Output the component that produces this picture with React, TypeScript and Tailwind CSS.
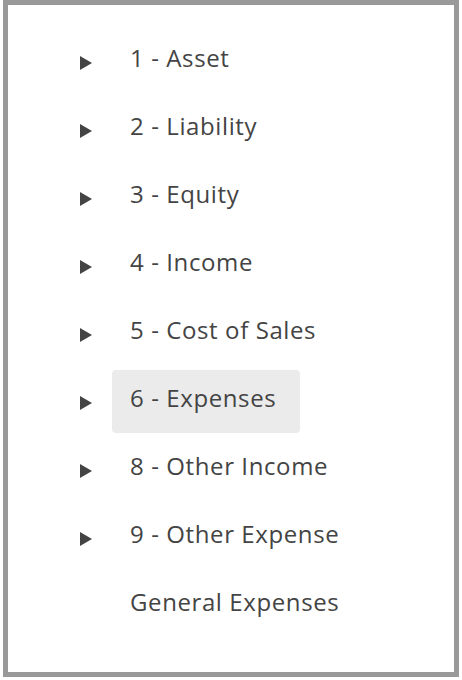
const accounts = [
  { label: '1 - Asset', expandable: true },
  { label: '2 - Liability', expandable: true },
  { label: '3 - Equity', expandable: true },
  { label: '4 - Income', expandable: true },
  { label: '5 - Cost of Sales', expandable: true },
  { label: '6 - Expenses', expandable: true, selected: true },
  { label: '8 - Other Income', expandable: true },
  { label: '9 - Other Expense', expandable: true },
  { label: 'General Expenses', expandable: false },
];

function Caret() {
  return (
    <svg width="12" height="14" viewBox="0 0 12 14" className="mt-[3px]">
      <path d="M0 0 L12 7 L0 14 Z" fill="#444" />
    </svg>
  );
}

export default function App() {
  return (
    <div className="w-[462px] h-[680px] bg-white">
      <div
        className="ml-[3px] w-[456px] h-[677px] border-[5px] border-[#999] bg-white pt-[25px]"
        style={{ fontFamily: '"Open Sans", "Noto Sans", sans-serif' }}
      >
        <ul className="flex flex-col gap-[5px]">
          {accounts.map((a) => (
            <li key={a.label} className="h-[63px] flex items-center">
              <div className="w-[104px] pl-[72px] flex items-center">
                {a.expandable && <Caret />}
              </div>
              <div
                className={
                  'h-[63px] flex items-center pl-[18px] pr-[24px] pb-[7px] rounded-[4px] text-[24px] tracking-[0.6px] text-[#444] ' +
                  (a.selected ? 'bg-[#ebebeb]' : '')
                }
              >
                {a.label}
              </div>
            </li>
          ))}
        </ul>
      </div>
    </div>
  );
}
